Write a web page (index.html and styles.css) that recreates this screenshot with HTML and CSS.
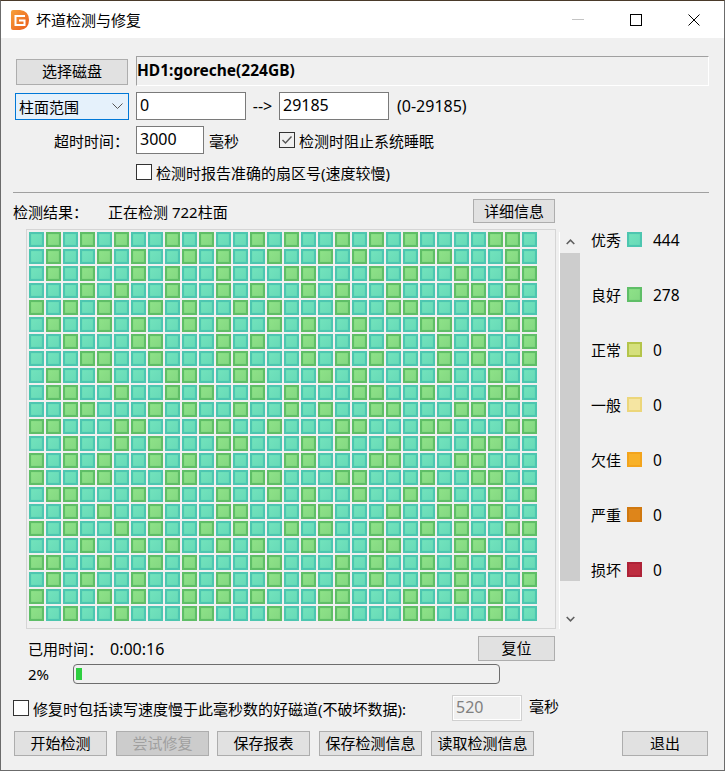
FILE: index.html
```html
<!DOCTYPE html>
<html lang="zh-CN">
<head>
    <meta charset="UTF-8">
    <meta name="viewport" content="width=device-width, initial-scale=1.0">
    <title>坏道检测与修复</title>
    <link rel="stylesheet" href="styles.css">
</head>
<body>
    <div class="window">
        <div class="titlebar">
            <svg class="app-icon" width="18" height="20" viewBox="0 0 18 20">
                <defs>
                    <linearGradient id="logoFill" x1="0" y1="0" x2="1" y2="1">
                        <stop offset="0" stop-color="#f7a13a"/>
                        <stop offset="1" stop-color="#ea5a1c"/>
                    </linearGradient>
                </defs>
                <path d="M0 2 Q0 0 2 0 H9 Q18 1 18 10 Q18 19 9 20 H2 Q0 20 0 18 Z" fill="url(#logoFill)"/>
                <path d="M14 6 H4.5 V15 H13.5 V10.5 H8" fill="none" stroke="#fff" stroke-width="2"/>
            </svg>
            <span class="title">坏道检测与修复</span>
            <div class="caption">
                <svg width="12" height="12" viewBox="0 0 12 12"><path d="M0 5.5 H12" stroke="#c4c4c4"/></svg>
                <svg width="12" height="12" viewBox="0 0 12 12"><rect x="0.5" y="0.5" width="11" height="11" fill="none" stroke="#000"/></svg>
                <svg width="12" height="12" viewBox="0 0 12 12"><path d="M0.5 0.5 L11.5 11.5 M11.5 0.5 L0.5 11.5" stroke="#000"/></svg>
            </div>
        </div>

        <div class="form">
            <div class="row row-disk">
                <button class="btn btn-disk">选择磁盘</button>
                <div class="disk-name">HD1:goreche(224GB)</div>
            </div>
            <div class="row row-range">
                <div class="select">
                    <span>柱面范围</span>
                    <svg width="11" height="6" viewBox="0 0 11 6"><path d="M0.5 0.5 L5.5 5.5 L10.5 0.5" fill="none" stroke="#555"/></svg>
                </div>
                <input class="field field-from" type="text" value="0">
                <span class="arrow num">--&gt;</span>
                <input class="field field-to" type="text" value="29185">
                <span class="range-note num">(0-29185)</span>
            </div>
            <div class="row row-timeout">
                <span class="timeout-label">超时时间：</span>
                <input class="field field-timeout" type="text" value="3000">
                <span class="unit">毫秒</span>
                <label class="check-label sleep-check">
                    <span class="check"><svg width="14" height="14" viewBox="0 0 14 14"><path d="M2.5 7 L5.5 10 L11.5 3.5" fill="none" stroke="#555" stroke-width="1.4"/></svg></span>
                    检测时阻止系统睡眠
                </label>
            </div>
            <div class="row row-sector">
                <label class="check-label">
                    <span class="check"></span>
                    检测时报告准确的扇区号(速度较慢)
                </label>
            </div>
        </div>

        <div class="divider"></div>

        <div class="result-head">
            <span class="result-label">检测结果：</span>
            <span>正在检测 722柱面</span>
            <button class="btn btn-detail">详细信息</button>
        </div>

        <div class="result-body">
            <div class="map" id="map"></div>
            <div class="scrollbar">
                <svg class="scroll-up" width="9" height="6" viewBox="0 0 9 6"><path d="M0.7 5 L4.5 1.2 L8.3 5" fill="none" stroke="#606060" stroke-width="1.6"/></svg>
                <div class="thumb"></div>
                <svg class="scroll-down" width="9" height="6" viewBox="0 0 9 6"><path d="M0.7 1 L4.5 4.8 L8.3 1" fill="none" stroke="#606060" stroke-width="1.6"/></svg>
            </div>
            <ul class="legend">
                <li><span class="legend-name">优秀</span><i class="swatch excellent"></i><span class="legend-count">444</span></li>
                <li><span class="legend-name">良好</span><i class="swatch good"></i><span class="legend-count">278</span></li>
                <li><span class="legend-name">正常</span><i class="swatch normal"></i><span class="legend-count">0</span></li>
                <li><span class="legend-name">一般</span><i class="swatch fair"></i><span class="legend-count">0</span></li>
                <li><span class="legend-name">欠佳</span><i class="swatch poor"></i><span class="legend-count">0</span></li>
                <li><span class="legend-name">严重</span><i class="swatch severe"></i><span class="legend-count">0</span></li>
                <li><span class="legend-name">损坏</span><i class="swatch damaged"></i><span class="legend-count">0</span></li>
            </ul>
        </div>

        <div class="time-row">
            <span class="time-label">已用时间：</span>
            <span class="num">0:00:16</span>
            <button class="btn btn-reset">复位</button>
        </div>
        <div class="progress-row">
            <span class="percent">2%</span>
            <div class="progress"><div class="progress-fill"></div></div>
        </div>
        <div class="repair-row">
            <label class="check-label">
                <span class="check"></span>
                修复时包括读写速度慢于此毫秒数的好磁道(不破坏数据):
            </label>
            <input class="field field-slow" type="text" value="520" disabled>
            <span class="unit-slow">毫秒</span>
        </div>
        <div class="action-row">
            <button class="btn btn-action">开始检测</button>
            <button class="btn btn-action" disabled>尝试修复</button>
            <button class="btn btn-action btn-report">保存报表</button>
            <button class="btn btn-action btn-wide">保存检测信息</button>
            <button class="btn btn-action btn-wide">读取检测信息</button>
            <button class="btn btn-action btn-exit">退出</button>
        </div>
    </div>

    <script src="script.js"></script>
</body>
</html>
```
FILE: styles.css
```css
* {
    box-sizing: border-box;
}
html, body {
    margin: 0;
    padding: 0;
}
body {
    font-family: "Noto Sans", "Noto Sans CJK SC", sans-serif;
    font-size: 15px;
    color: #000;
    background: #f0f0f0;
}
.num {
    font-size: 16px;
}
.window {
    width: 725px;
    height: 771px;
    overflow: hidden;
    background: #f0f0f0;
    border: 1px solid #6b6b6b;
    border-top: 1px solid #4a3a2a;
}
.titlebar {
    height: 37px;
    background: #fff;
    display: flex;
    align-items: center;
    padding-left: 10px;
}
.app-icon {
    margin-top: 1px;
}
.title {
    margin-left: 7px;
}
.caption {
    margin-left: auto;
    display: flex;
    gap: 46px;
    padding-right: 24px;
}
.caption svg {
    display: block;
}
.btn {
    font: inherit;
    color: #000;
    background: #e1e1e1;
    border: 1px solid #adadad;
    padding: 0;
    height: 25px;
    line-height: 1;
}
.btn:disabled {
    background: #cccccc;
    color: #a0a0a0;
}
.form {
    padding: 18px 0 0 14px;
}
.row {
    display: flex;
    align-items: center;
}
.row-disk {
    height: 30px;
}
.btn-disk {
    width: 112px;
    height: 26px;
    margin: 1px 0 0 1px;
}
.disk-name {
    width: 573px;
    height: 30px;
    margin-left: 8px;
    line-height: 26px;
    font-weight: bold;
    font-size: 15.5px;
    border: 1px solid;
    border-color: #a0a0a0 #fff #fff #a0a0a0;
}
.row-range {
    height: 28px;
    margin-top: 6px;
}
.select {
    width: 114px;
    height: 27px;
    display: flex;
    align-items: center;
    justify-content: space-between;
    padding: 0 5px 0 3px;
    background: #e5f1fb;
    border: 1px solid #0078d7;
}
.field {
    font: inherit;
    font-size: 16px;
    height: 28px;
    padding: 0 3px 2px 3px;
    color: #000;
    background: #fff;
    border: 1px solid #7a7a7a;
    border-radius: 0;
    outline: none;
}
.field-from {
    width: 110px;
    margin-left: 7px;
}
.arrow {
    width: 33px;
    text-align: center;
}
.field-to {
    width: 110px;
}
.range-note {
    margin-left: 8px;
}
.row-timeout {
    height: 28px;
    margin-top: 6px;
}
.timeout-label {
    width: 121px;
    padding-left: 39px;
}
.field-timeout {
    width: 68px;
}
.unit {
    margin-left: 5px;
    width: 70px;
}
.check-label {
    display: flex;
    align-items: center;
    gap: 4px;
}
.check {
    width: 16px;
    height: 16px;
    flex: none;
    display: flex;
    align-items: center;
    justify-content: center;
    background: #fff;
    border: 1px solid #333;
}
.sleep-check .check {
    background: #f0f0f0;
}
.row-sector {
    height: 20px;
    margin-top: 8px;
    padding-left: 121px;
}
.divider {
    height: 1px;
    margin: 10px 15px 0 12px;
    background: #a0a0a0;
}
.result-head {
    width: 542px;
    height: 24px;
    margin: 6px 0 0 12px;
    display: flex;
    align-items: center;
}
.result-label {
    width: 95px;
}
.btn-detail {
    width: 82px;
    height: 24px;
    margin-left: auto;
}
.result-body {
    display: flex;
    align-items: flex-start;
    margin: 6px 0 0 25px;
}
.map {
    width: 530px;
    height: 400px;
    padding: 2px;
    display: grid;
    grid-template-columns: repeat(30, 15px);
    grid-auto-rows: 15px;
    gap: 2px;
    border: 1px solid #d5d5d5;
}
.swatch, .cell {
    display: block;
    width: 15px;
    height: 15px;
    border: 2px solid;
}
.excellent {
    border-color: #4dc6b0;
    background: linear-gradient(135deg, #72e3bc, #68dab8);
    box-shadow: inset 0 0 1px #4dc6b0;
}
.good {
    border-color: #5fbe67;
    background: linear-gradient(135deg, #8ee288, #84d882);
    box-shadow: inset 0 0 1px #5fbe67;
}
.normal {
    border-color: #b4c44a;
    background: #d5e07c;
}
.fair {
    border-color: #ecd67a;
    background: #f5e5a2;
}
.poor {
    border-color: #f3a41c;
    background: #f8b128;
}
.severe {
    border-color: #d0780f;
    background: #de851a;
}
.damaged {
    border-color: #ae2338;
    background: #be2d40;
}
.scrollbar {
    width: 21px;
    height: 397px;
    margin: 3px 0 0 3px;
    border-left: 1px solid #fff;
    position: relative;
}
.thumb {
    width: 20px;
    height: 328px;
    margin-top: 21px;
    background: #cdcdcd;
}
.scroll-up, .scroll-down {
    position: absolute;
    left: 6px;
}
.scroll-up {
    top: 7px;
}
.scroll-down {
    bottom: 7px;
}
.legend {
    list-style: none;
    margin: 3px 0 0 11px;
    padding: 0;
}
.legend li {
    height: 15px;
    margin-bottom: 40px;
    display: flex;
    align-items: center;
    line-height: 15px;
}
.legend-name {
    width: 30px;
    padding-top: 2px;
}
.legend-count {
    padding-top: 2px;
    font-size: 15.5px;
}
.swatch {
    margin: 0 11px 0 6px;
}
.time-row {
    width: 527px;
    height: 25px;
    margin: 7px 0 0 27px;
    display: flex;
    align-items: center;
}
.time-label {
    width: 82px;
}
.btn-reset {
    width: 77px;
    margin-left: auto;
}
.progress-row {
    height: 20px;
    margin: 3px 0 0 27px;
    display: flex;
    align-items: center;
}
.percent {
    width: 45px;
}
.progress {
    width: 427px;
    height: 20px;
    padding: 3px 2px;
    border: 1px solid #6d6d6d;
    border-radius: 4px;
}
.progress-fill {
    width: 6px;
    height: 100%;
    background: #2ecf40;
}
.repair-row {
    height: 26px;
    margin: 11px 0 0 12px;
    display: flex;
    align-items: center;
}
.field-slow {
    width: 70px;
    height: 26px;
    margin-left: 46px;
    color: #808080;
    background: #f0f0f0;
    border: 1px solid #d0d0d0;
    box-shadow: 0 0 0 1px #fff inset;
}
.unit-slow {
    margin: 0 0 5px 7px;
}
.action-row {
    height: 25px;
    margin: 10px 0 0 13px;
    display: flex;
    gap: 9px;
}
.btn-action {
    width: 93px;
}
.btn-report {
    margin-left: -1px;
}
.btn-wide {
    width: 103px;
}
.btn-exit {
    width: 86px;
    margin-left: 79px;
}
```
FILE: script.js
```js
// 1 = good cylinder, 0 = excellent
const rows = [
    '010101001010010100101010000110',
    '010010100101001001010001100010',
    '010100101001000110001010010011',
    '000101001001010010100100011010',
    '101010010100101000100110001100',
    '010010100101001010010001100011',
    '001000110001010010010100101001',
    '000110010001100010101000101001',
    '010010001100110001010010100100',
    '011001001010010100011001000110',
    '001100010100100101001100011000',
    '110001100011001000110001100011',
    '001001010001100010100101001100',
    '101010010101000110001100011000',
    '100110001100011000110001001100',
    '011000101001001010010010100101',
    '001010010001100011000100110100',
    '101001010010100101001001010011',
    '000100101001010010001100011000',
    '110010010100011000101001010100',
    '010100100101001010101001010001',
    '100010100101010001100010010100',
    '101001000110001001100011000100'
];

const map = document.getElementById('map');
rows.forEach(row => {
    for (const c of row) {
        const cell = document.createElement('i');
        cell.className = 'cell ' + (c === '1' ? 'good' : 'excellent');
        map.appendChild(cell);
    }
});
```
